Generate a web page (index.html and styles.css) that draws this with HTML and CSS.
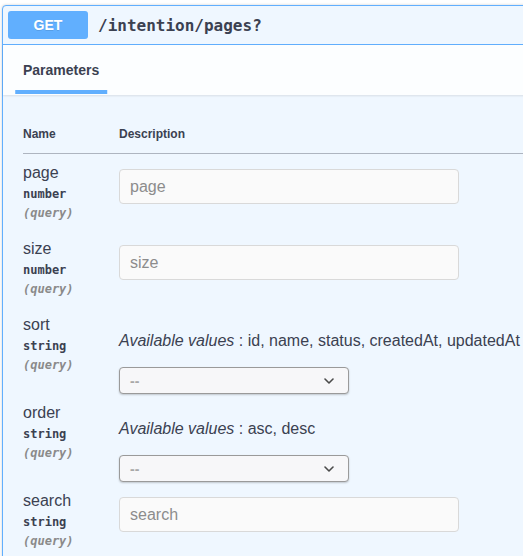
FILE: index.html
```html
<!DOCTYPE html>
<html>
<head>
<meta charset="utf-8">
<link rel="stylesheet" href="styles.css">
</head>
<body>
<div class="opblock">
  <div class="summary">
    <span class="method">GET</span>
    <span class="path">/intention/pages?</span>
  </div>
  <div class="section-header">
    <div class="tab-item"><h4 class="title"><span>Parameters</span></h4></div>
  </div>
  <div class="table-container">
    <table class="params">
      <thead>
        <tr><th class="col-name">Name</th><th class="col-desc">Description</th></tr>
      </thead>
      <tbody>
        <tr>
          <td class="col-name">
            <div class="p-name">page</div>
            <div class="p-type">number</div>
            <div class="p-in">(query)</div>
          </td>
          <td class="col-desc"><input class="txt" type="text" placeholder="page"></td>
        </tr>
        <tr>
          <td class="col-name">
            <div class="p-name">size</div>
            <div class="p-type">number</div>
            <div class="p-in">(query)</div>
          </td>
          <td class="col-desc"><input class="txt" type="text" placeholder="size"></td>
        </tr>
        <tr>
          <td class="col-name">
            <div class="p-name">sort</div>
            <div class="p-type">string</div>
            <div class="p-in">(query)</div>
          </td>
          <td class="col-desc">
            <p class="avail"><i>Available values</i> : id, name, status, createdAt, updatedAt</p>
            <div class="sel"><span class="sel-val">--</span>
              <svg class="chev" width="10" height="6" viewBox="0 0 10 6"><path d="M1 1l4 4 4-4" fill="none" stroke="#4a4a4a" stroke-width="1.6" stroke-linecap="round" stroke-linejoin="round"/></svg>
            </div>
          </td>
        </tr>
        <tr>
          <td class="col-name">
            <div class="p-name">order</div>
            <div class="p-type">string</div>
            <div class="p-in">(query)</div>
          </td>
          <td class="col-desc">
            <p class="avail"><i>Available values</i> : asc, desc</p>
            <div class="sel"><span class="sel-val">--</span>
              <svg class="chev" width="10" height="6" viewBox="0 0 10 6"><path d="M1 1l4 4 4-4" fill="none" stroke="#4a4a4a" stroke-width="1.6" stroke-linecap="round" stroke-linejoin="round"/></svg>
            </div>
          </td>
        </tr>
        <tr>
          <td class="col-name">
            <div class="p-name">search</div>
            <div class="p-type">string</div>
            <div class="p-in">(query)</div>
          </td>
          <td class="col-desc"><input class="txt" type="text" placeholder="search"></td>
        </tr>
      </tbody>
    </table>
  </div>
</div>
</body>
</html>
```
FILE: styles.css
```css
html, body {
  margin: 0;
  padding: 0;
  background: #fff;
  overflow: hidden;
}
body {
  padding: 5px 0 0 2px;
  font-family: "Liberation Sans", Arial, sans-serif;
  color: #3b4151;
}
.opblock {
  width: 560px;
  border: 1px solid #61affe;
  border-radius: 4px;
  background: #eff7ff;
  box-shadow: 0 0 3px rgba(0,0,0,.19);
}
.summary {
  display: flex;
  align-items: center;
  padding: 5px;
  border-bottom: 1px solid #61affe;
}
.method {
  background: #61affe;
  border-radius: 3px;
  color: #fff;
  font-weight: 700;
  font-size: 14px;
  line-height: 16px;
  min-width: 80px;
  padding: 6px 0;
  text-align: center;
  text-shadow: 0 1px 0 rgba(0,0,0,.1);
}
.path {
  font-family: "DejaVu Sans Mono", monospace;
  font-weight: 700;
  font-size: 16px;
  color: #3b4151;
  padding: 0 10px;
}
.section-header {
  display: flex;
  align-items: center;
  min-height: 50px;
  box-sizing: border-box;
  padding: 8px 20px;
  background: rgba(255,255,255,.8);
  box-shadow: 0 1px 2px rgba(0,0,0,.1);
}
.title {
  margin: 0;
  font-size: 14px;
  font-weight: 700;
  color: #3b4151;
}
.title span {
  position: relative;
}
.title span::after {
  content: "";
  position: absolute;
  left: 50%;
  transform: translateX(-50%);
  width: 120%;
  height: 4px;
  bottom: -16px;
  background: #61affe;
}
.table-container {
  padding: 20px;
}
.params {
  border-collapse: collapse;
  width: 100%;
}
.params th {
  text-align: left;
  font-size: 12px;
  font-weight: 700;
  padding: 12px 0;
  line-height: 14px;
  border-bottom: 1px solid rgba(59,65,81,.2);
  color: #3b4151;
}
.col-name {
  width: 96px;
}
.params td {
  vertical-align: top;
  padding: 10px 0 0;
}
.params td.col-name {
  padding: 10px 0;
}
.p-name {
  font-size: 16px;
  line-height: 18px;
}
.p-type {
  font-family: "DejaVu Sans Mono", monospace;
  font-size: 12px;
  font-weight: 700;
  line-height: 14px;
  padding: 5px 0;
}
.p-in {
  font-family: "DejaVu Sans Mono", monospace;
  font-size: 12px;
  font-weight: 600;
  font-style: italic;
  line-height: 14px;
  color: #8a8a8a;
}
.txt {
  display: block;
  box-sizing: border-box;
  width: 340px;
  height: 35px;
  margin: 5px 0;
  padding: 8px 10px;
  border: 1px solid #d9d9d9;
  border-radius: 4px;
  background: #fafafa;
  font-family: "Liberation Sans", Arial, sans-serif;
  font-size: 16px;
  color: #3b4151;
  outline: none;
}
.txt::placeholder {
  color: #8c8c8c;
}
.avail {
  margin: 16px 0 0;
  font-size: 16px;
  line-height: 18px;
  color: #3b4151;
  white-space: nowrap;
}
.sel {
  display: flex;
  align-items: center;
  justify-content: space-between;
  box-sizing: border-box;
  width: 230px;
  height: 27px;
  margin-top: 17px;
  padding: 0 14px 0 10px;
  border: 1px solid #9a9a9a;
  border-radius: 4px;
  background: #f7f7f9;
  box-shadow: 0 1px 2px rgba(0,0,0,.2);
}
.sel-val {
  font-size: 14px;
  color: #a8a8a8;
  font-weight: 700;
}
.chev {
  display: block;
}
```
